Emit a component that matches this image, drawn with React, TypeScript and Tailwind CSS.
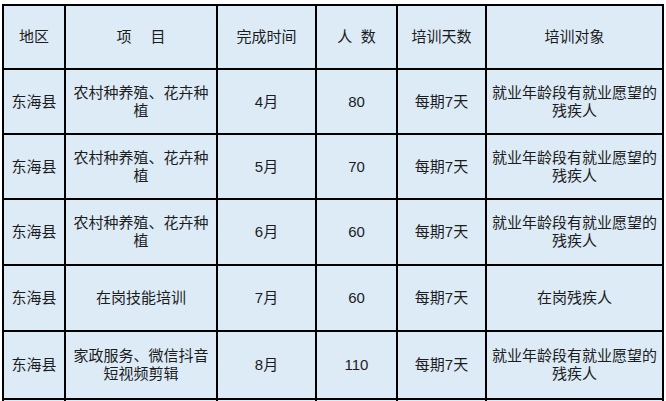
const header = ["地区", "项　 目", "完成时间", "人  数", "培训天数", "培训对象"];

const rows: { area: string; project: string; month: string; count: string; days: string; target: string }[] = [
  { area: "东海县", project: "农村种养殖、花卉种植", month: "4月", count: "80", days: "每期7天", target: "就业年龄段有就业愿望的残疾人" },
  { area: "东海县", project: "农村种养殖、花卉种植", month: "5月", count: "70", days: "每期7天", target: "就业年龄段有就业愿望的残疾人" },
  { area: "东海县", project: "农村种养殖、花卉种植", month: "6月", count: "60", days: "每期7天", target: "就业年龄段有就业愿望的残疾人" },
  { area: "东海县", project: "在岗技能培训", month: "7月", count: "60", days: "每期7天", target: "在岗残疾人" },
  { area: "东海县", project: "家政服务、微信抖音短视频剪辑", month: "8月", count: "110", days: "每期7天", target: "就业年龄段有就业愿望的残疾人" },
];

function Cell({ children }: { children: React.ReactNode }) {
  return (
    <div className="flex items-center justify-center bg-[#ddebf7] px-1 text-center whitespace-pre-wrap">
      {children}
    </div>
  );
}

export default function App() {
  return (
    <div className="h-[401px] w-[666px] overflow-hidden bg-white">
      <div
        className="ml-[2px] mt-[4px] grid w-[662px] grid-cols-[60px_150px_97px_79px_87px_175px] grid-rows-[62px_63px_63px_64px_64px_66px_60px] gap-[2px] bg-black p-[2px] text-[15px] leading-[18px] text-[#1c1c1c]"
        style={{ fontFamily: "'Liberation Sans', 'Noto Sans CJK SC', sans-serif" }}
      >
        {header.map((h, i) => (
          <Cell key={i}>{h}</Cell>
        ))}
        {rows.map((r, i) => (
          <>
            <Cell key={`a${i}`}>{r.area}</Cell>
            <Cell key={`p${i}`}>{r.project}</Cell>
            <Cell key={`m${i}`}>{r.month}</Cell>
            <Cell key={`c${i}`}>{r.count}</Cell>
            <Cell key={`d${i}`}>{r.days}</Cell>
            <Cell key={`t${i}`}>{r.target}</Cell>
          </>
        ))}
        {[0, 1, 2, 3, 4, 5].map((i) => (
          <Cell key={`e${i}`}>{""}</Cell>
        ))}
      </div>
    </div>
  );
}
